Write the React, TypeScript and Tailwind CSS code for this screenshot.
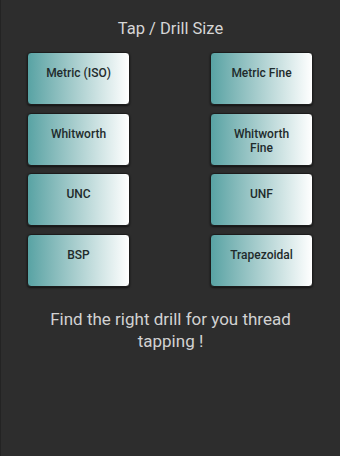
const sizes = [
  "Metric (ISO)",
  "Metric Fine",
  "Whitworth",
  "Whitworth Fine",
  "UNC",
  "UNF",
  "BSP",
  "Trapezoidal",
];

function SizeButton({ label }: { label: string }) {
  return (
    <button
      type="button"
      className="flex h-[53px] w-[103px] items-start justify-center rounded-[4px] border border-[#1c1c1c] bg-linear-to-r from-[#58a3a4] to-white px-3 pt-[13px] text-center text-[12px] leading-[14px] font-medium text-[#1f2b2c] shadow-[0_1px_2px_rgba(0,0,0,0.6)]"
    >
      <span className="max-w-[70px]">{label}</span>
    </button>
  );
}

export default function App() {
  return (
    <div
      className="flex h-[456px] w-[340px] flex-col items-center border-l border-[#232323] bg-[#2d2d2d]"
      style={{ fontFamily: "Roboto, 'Liberation Sans', sans-serif" }}
    >
      <h1 className="pt-[19px] text-[16.5px] leading-[19px] text-[#d6d6d6]">Tap / Drill Size</h1>
      <div className="mt-[14px] grid grid-cols-[103px_103px] gap-x-[80px] gap-y-[7.5px] pr-[1px]">
        {sizes.map((s) => (
          <SizeButton key={s} label={s} />
        ))}
      </div>
      <p className="mt-[21.5px] w-[270px] text-center text-[17px] leading-[22px] text-[#d2d2d2]">
        Find the right drill for you thread tapping !
      </p>
    </div>
  );
}
